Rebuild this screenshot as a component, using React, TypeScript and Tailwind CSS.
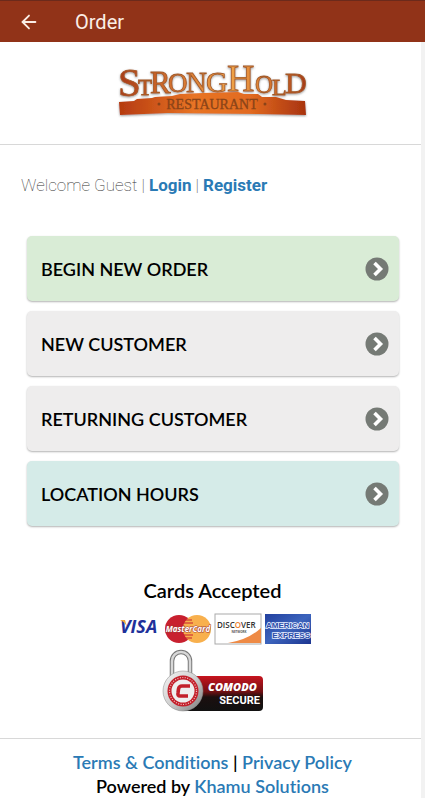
import type { ReactNode } from "react";
import { ArrowLeft } from "lucide-react";

const menuItems = [
  { label: "BEGIN NEW ORDER", href: "#order", color: "bg-[#d9ecd6]" },
  { label: "NEW CUSTOMER", href: "#new", color: "bg-[#eeeded]" },
  { label: "RETURNING CUSTOMER", href: "#returning", color: "bg-[#eeeded]" },
  { label: "LOCATION HOURS", href: "#hours", color: "bg-[#d5ebe8]" },
];

const logoLetters = [
  { char: "S", x: 10, y: 41, size: 41 },
  { char: "T", x: 30, y: 40, size: 23 },
  { char: "R", x: 42, y: 38, size: 31 },
  { char: "O", x: 60, y: 37, size: 27 },
  { char: "N", x: 78, y: 37, size: 29 },
  { char: "G", x: 98, y: 37, size: 30 },
  { char: "H", x: 119, y: 36, size: 38 },
  { char: "O", x: 147, y: 38, size: 25 },
  { char: "L", x: 164, y: 40, size: 24 },
  { char: "D", x: 177, y: 38, size: 30 },
];

function StrongholdLogo() {
  return (
    <svg
      viewBox="0 0 210 70"
      className="h-[70px] w-[210px]"
      role="img"
      aria-label="Stronghold Restaurant"
      fontFamily="'Liberation Serif', serif"
    >
      <defs>
        <linearGradient id="copper" gradientUnits="userSpaceOnUse" x1="10" x2="198" y1="0" y2="0">
          <stop offset="0" stopColor="#a83a17" />
          <stop offset="0.25" stopColor="#cf6a2c" />
          <stop offset="0.6" stopColor="#f0a347" />
          <stop offset="0.8" stopColor="#d9782f" />
          <stop offset="1" stopColor="#a53a18" />
        </linearGradient>
        <linearGradient id="banner" x1="0" x2="1" y1="0" y2="0">
          <stop offset="0" stopColor="#b53a10" />
          <stop offset="0.4" stopColor="#e87425" />
          <stop offset="0.7" stopColor="#e26b20" />
          <stop offset="1" stopColor="#a8330f" />
        </linearGradient>
        <filter id="shadow" x="-10%" y="-10%" width="120%" height="130%">
          <feDropShadow dx="0" dy="1" stdDeviation="1" floodColor="#555" floodOpacity="0.6" />
        </filter>
      </defs>
      <g filter="url(#shadow)">
        <path
          d="M11 47 L26 46 L29 44 L44 43 L47 42 L64 41 L72 39 L95 38 L130 37 L136 39 L150 39 L154 42 L168 42 L178 45 L197 46 L198 60 L150 59 L60 58 L12 60 Z"
          fill="url(#banner)"
        />
        {logoLetters.map(({ char, x, y, size }) => (
          <text
            key={x}
            x={x}
            y={y}
            fontSize={size}
            fill="url(#copper)"
            stroke="#a45a28"
            strokeWidth="0.8"
          >
            {char}
          </text>
        ))}
      </g>
      <text x="104" y="54" fontSize="14" textAnchor="middle" fill="#8a4318" stroke="#8a4318" strokeWidth="0.3">
        RESTAURANT
      </text>
      <circle cx="51" cy="49" r="1.5" fill="#8a4318" />
      <circle cx="157" cy="49" r="1.5" fill="#8a4318" />
    </svg>
  );
}

function ChevronBadge() {
  return (
    <svg viewBox="0 0 24 24" className="size-6 shrink-0" aria-hidden="true">
      <circle cx="12" cy="12" r="11.5" fill="#757a75" />
      <path d="M9.5 6 L15.5 12 L9.5 18" fill="none" stroke="#fff" strokeWidth="3.6" />
    </svg>
  );
}

function PaymentCards() {
  return (
    <svg
      viewBox="-7 0 200 32"
      className="h-8 w-[200px]"
      role="img"
      aria-label="Visa, MasterCard, Discover, American Express"
      fontFamily="'Open Sans', sans-serif"
      fontWeight="700"
    >
      <defs>
        <linearGradient id="amex" x1="0" x2="1" y1="0" y2="1">
          <stop offset="0" stopColor="#22409f" />
          <stop offset="0.5" stopColor="#3c64bd" />
          <stop offset="1" stopColor="#1c3590" />
        </linearGradient>
      </defs>
      <text x="0" y="20" fontSize="18" fontStyle="italic" fontWeight="700" fill="#20309a">
        VISA
      </text>
      <path d="M0 7 H5 L7 14 Q5 9 0 7Z" fill="#eda63a" />
      <circle cx="59" cy="16" r="14" fill="#c8202f" />
      <circle cx="77" cy="16" r="14" fill="#f8b04d" />
      <path d="M64 7h8M63 10h10M64 22h9M64 25h8" stroke="#c8202f" />
      <text
        x="68"
        y="19"
        fontSize="8"
        fontStyle="italic"
        textAnchor="middle"
        fill="#fff"
        stroke="#a23a37"
        strokeWidth="1"
        paintOrder="stroke"
      >
        MasterCard
      </text>
      <rect x="95" y="1" width="46" height="30" fill="#fff" stroke="#aaa" />
      <path d="M141 15 V30 H108 Q128 27 141 15Z" fill="#ee8a45" />
      <text x="97" y="15" fontSize="8" fontWeight="600" fill="#333">
        DISC<tspan fill="#ee7f2d">O</tspan>VER
      </text>
      <text x="119" y="20" fontSize="3" textAnchor="middle" fill="#555">
        NETWORK
      </text>
      <rect x="145" y="1" width="46" height="30" fill="url(#amex)" />
      <g
        fill="#2b4ca8"
        stroke="#e6eeff"
        strokeWidth="1.6"
        paintOrder="stroke"
        fontSize="8"
        fontFamily="'Liberation Sans', sans-serif"
      >
        <text x="146" y="15">AMERICAN</text>
        <text x="190" y="25" textAnchor="end">EXPRESS</text>
      </g>
    </svg>
  );
}

function ComodoSeal() {
  return (
    <svg
      viewBox="0 0 102 64"
      className="h-16 w-[102px]"
      role="img"
      aria-label="Comodo Secure"
      fontFamily="'Open Sans', sans-serif"
    >
      <defs>
        <linearGradient id="plate" x1="0" x2="0" y1="0" y2="1">
          <stop offset="0" stopColor="#c8141f" />
          <stop offset="0.45" stopColor="#701013" />
          <stop offset="0.6" stopColor="#1b0f0f" />
          <stop offset="1" stopColor="#111" />
        </linearGradient>
        <linearGradient id="steel" x1="0" x2="1" y1="0" y2="1">
          <stop offset="0" stopColor="#f4f4f4" />
          <stop offset="0.5" stopColor="#d0d0d0" />
          <stop offset="1" stopColor="#777" />
        </linearGradient>
      </defs>
      <rect x="20" y="27" width="81" height="35" rx="4" fill="url(#plate)" />
      <path d="M10 34 V12 a9 9 0 0 1 18 0 V34" fill="none" stroke="#777" strokeWidth="4.5" />
      <path d="M10 34 V12 a9 9 0 0 1 18 0 V34" fill="none" stroke="#d8d8d8" strokeWidth="2.5" />
      <circle cx="21" cy="42" r="20" fill="url(#steel)" stroke="#888" strokeWidth="0.5" />
      <circle cx="21" cy="42" r="15.5" fill="#c3202b" />
      <circle cx="21" cy="42" r="13.5" fill="none" stroke="#f1c0c2" strokeWidth="1.2" strokeDasharray="1 1.5" />
      <circle cx="21" cy="42" r="11.5" fill="#eee" />
      <path
        d="M28 37 H20 Q17 37 16.5 40 L16 44 Q15.5 47 18 47 H26"
        fill="none"
        stroke="#c3202b"
        strokeWidth="3.6"
      />
      <text x="46" y="42" fontSize="11" fontStyle="italic" fontWeight="800" fill="#fff">
        COMODO
      </text>
      <text x="98" y="55" fontSize="11" fontWeight="700" fontFamily="Roboto, sans-serif" textAnchor="end" fill="#fff">
        SECURE
      </text>
    </svg>
  );
}

function TextLink({ href, children }: { href: string; children: ReactNode }) {
  return (
    <a href={href} className="text-[#2a7ab5] hover:underline">
      {children}
    </a>
  );
}

export default function App() {
  return (
    <div className="bg-white font-['Lato',sans-serif] text-black [font-variant-ligatures:none]">
      <header className="flex h-[42px] items-center gap-[35px] border-t border-[#6b2a1b] bg-[#913318] px-[18px] font-['Roboto',sans-serif] text-[#fbeee6]">
        <button type="button" aria-label="Back">
          <ArrowLeft className="size-[22px]" strokeWidth={2} />
        </button>
        <h1 className="text-xl">Order</h1>
      </header>

      <div className="relative">
        {/* Scroll track */}
        <div className="absolute inset-y-0 right-0 w-1 bg-[#f2f2f2]" />

        <div className="flex justify-center border-b border-[#d8d8d8] pt-[13px] pb-[19px]">
          <StrongholdLogo />
        </div>

        <p className="px-[21px] pt-7 font-['Roboto',sans-serif] text-[17px] leading-6 font-thin text-[#333]">
          Welcome Guest |{" "}
          <a href="#login" className="font-bold text-[#2a7ab5]">
            Login
          </a>{" "}
          |{" "}
          <a href="#register" className="font-bold text-[#2a7ab5]">
            Register
          </a>
        </p>

        <nav className="mt-[39px] flex flex-col gap-[10px] pr-[26px] pl-[27px]">
          {menuItems.map(({ label, href, color }) => (
            <a
              key={label}
              href={href}
              className={`${color} flex h-[65px] items-center justify-between rounded-[5px] pr-[10px] pl-[14px] text-lg font-semibold shadow-[0_1px_2px_rgba(0,0,0,0.3)]`}
            >
              {label}
              <ChevronBadge />
            </a>
          ))}
        </nav>

        <section className="mt-[50px] flex flex-col items-center">
          <h2 className="text-xl leading-7 font-semibold">Cards Accepted</h2>
          <div className="mt-[9px]">
            <PaymentCards />
          </div>
          <div className="mt-1">
            <ComodoSeal />
          </div>
        </section>

        <footer className="mt-[25px] border-t border-[#d8d8d8] pt-[11px] text-center text-lg leading-6 font-semibold">
          <p>
            <TextLink href="#terms">Terms &amp; Conditions</TextLink> |{" "}
            <TextLink href="#privacy">Privacy Policy</TextLink>
          </p>
          <p>
            Powered by <TextLink href="#khamu">Khamu Solutions</TextLink>
          </p>
        </footer>
      </div>
    </div>
  );
}
